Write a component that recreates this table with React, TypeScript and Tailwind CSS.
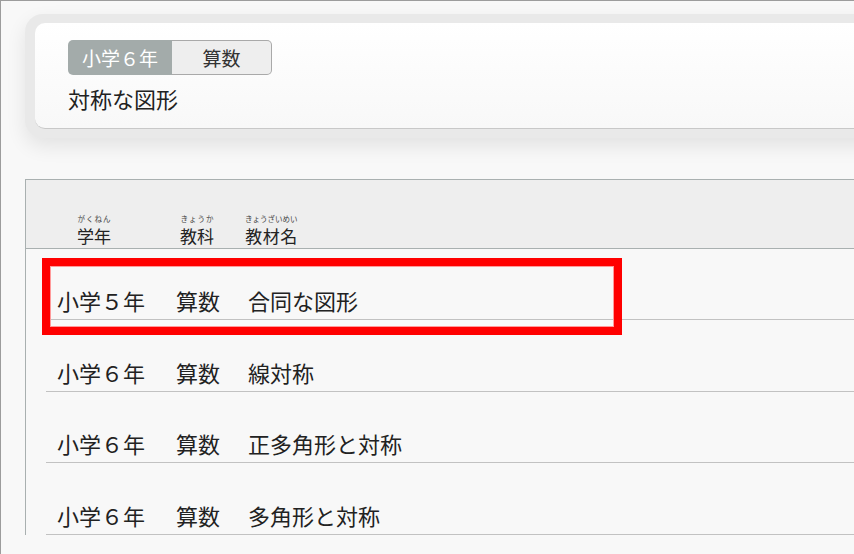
import React from "react";

const rows = [
  { grade: "小学５年", subject: "算数", name: "合同な図形", h: "h-[71px]" },
  { grade: "小学６年", subject: "算数", name: "線対称", h: "h-[72px]" },
  { grade: "小学６年", subject: "算数", name: "正多角形と対称", h: "h-[71px]" },
  { grade: "小学６年", subject: "算数", name: "多角形と対称", h: "h-[72px]" },
];

export default function App() {
  return (
    <div
      className="relative w-[854px] h-[554px] overflow-hidden border-l border-t border-[#9c9c9c] bg-[#f8f8f8] text-[#222]"
      style={{ fontFamily: '"Noto Sans CJK JP", "Noto Sans", sans-serif' }}
    >
      {/* top card */}
      <div className="pl-[24px] pt-[13px]">
        <div className="w-[900px] rounded-[18px] bg-[#e9e9e9] pt-[9px] pb-[9px] pl-[10px] shadow-[0_8px_20px_rgba(0,0,0,0.09)]">
          <div className="rounded-[10px] bg-gradient-to-b from-white to-[#f8f8f8] border-b border-[#c8c8c8] pl-[33px] pt-[17px] pb-[15px]">
            <div className="flex h-[35px]">
              <div className="w-[104px] flex items-center justify-center rounded-l-[5px] bg-[#a3abaa] text-white text-[19px] leading-none">
                小学６年
              </div>
              <div className="w-[100px] flex items-center justify-center rounded-r-[5px] bg-[#eeeeee] border border-l-0 border-[#a9a9a9] text-[#333] text-[19px] leading-none">
                算数
              </div>
            </div>
            <div className="mt-[8px] text-[22px] leading-[30px]">対称な図形</div>
          </div>
        </div>
      </div>

      {/* table */}
      <div className="ml-[24px] mt-[41px] w-[900px] border-t border-l border-[#a9b0b0]">
        <div className="h-[69px] bg-[#eeeeee] border-b border-[#a9b0b0] flex items-end pb-[4px] pl-[51px] text-[17px] leading-none">
          <ruby className="w-[103px]">
            学年<rt className="text-[7.5px] text-[#444] leading-none pb-[4px]">がくねん</rt>
          </ruby>
          <ruby className="w-[65px]">
            教科<rt className="text-[7.5px] text-[#444] leading-none pb-[4px]">きょうか</rt>
          </ruby>
          <ruby>
            教材名<rt className="text-[7.5px] text-[#444] leading-none pb-[4px]">きょうざいめい</rt>
          </ruby>
        </div>
        <div className="ml-[20px]">
          {rows.map((r, i) => (
            <div
              key={i}
              className={`${r.h} border-b border-[#c2c2c2] flex items-end pb-[8px] pl-[11px] text-[22px] leading-none`}
            >
              <div className="w-[119px]">{r.grade}</div>
              <div className="w-[72px]">{r.subject}</div>
              <div>{r.name}</div>
            </div>
          ))}
        </div>
      </div>

      {/* red highlight */}
      <div className="absolute left-[41px] top-[257px] w-[580px] h-[77px] border-[8px] border-[#ff0000] shadow-[inset_0_0_0_1px_#ff9a9a]" />
    </div>
  );
}
